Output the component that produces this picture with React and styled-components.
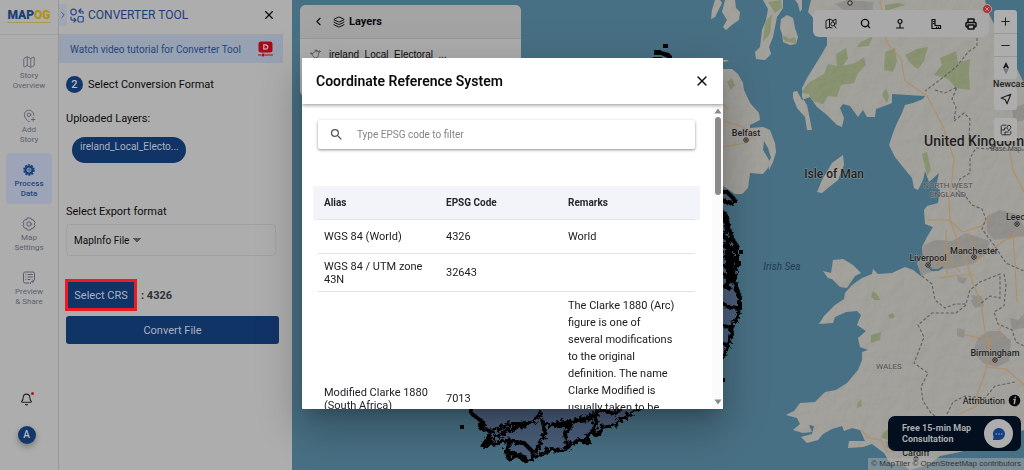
import React, { useState } from "react";
import styled, { createGlobalStyle, css } from "styled-components";
import {
  Bell,
  ChevronLeft,
  ChevronRight,
  Layers,
  Map,
  MapPinPlus,
  Minus,
  Plus,
  Printer,
  Search,
  X,
} from "lucide-react";
import { MdSearch } from "react-icons/md";

const GlobalStyle = createGlobalStyle`
  * {
    box-sizing: border-box;
  }

  body {
    margin: 0;
    overflow: hidden;
    font-family: Roboto, "Liberation Sans", sans-serif;
    font-size: 12px;
    color: #0c0c0e;
  }

  button, input, select {
    font-family: inherit;
    margin: 0;
  }

  svg {
    display: block;
    flex-shrink: 0;
  }
`;

const Page = styled.div`
  display: flex;
  height: 100vh;
  background: #adadad;
`;

/* ---------- rail ---------- */

const Rail = styled.nav`
  display: flex;
  flex-direction: column;
  align-items: center;
  flex: 0 0 59px;
  border-right: 1px solid #999;
`;

const LogoBox = styled.a`
  display: flex;
  justify-content: center;
  align-items: center;
  width: 100%;
  height: 35px;
  padding-bottom: 4px;
  border-bottom: 1px solid #a0a0a0;
  text-decoration: none;
`;

const Logo = styled.span`
  font-size: 12px;
  font-weight: 900;
  line-height: 14px;
  color: #1a3f72;
  border-bottom: 1px solid #a89a50;
`;

const LogoAccent = styled.span`
  color: #b09212;
`;

const RailList = styled.div`
  display: flex;
  flex-direction: column;
  gap: 3px;
  padding-top: 10px;
`;

const RailItem = styled.button`
  display: flex;
  flex-direction: column;
  align-items: center;
  gap: 2px;
  width: 46px;
  height: 51px;
  padding: 10px 0 0;
  border: 0;
  border-radius: 4px;
  background: ${(props) => (props.$active ? "#9da4b8" : "transparent")};
  color: ${(props) => (props.$active ? "#1f457c" : "#5a5f70")};
  font-size: 8px;
  font-weight: ${(props) => (props.$active ? 500 : 400)};
  line-height: 10px;
  cursor: pointer;
`;

const RailFooter = styled.div`
  display: flex;
  flex-direction: column;
  align-items: center;
  gap: 20px;
  margin-top: auto;
  padding: 0 5px 26px 0;
`;

const BellButton = styled.button`
  position: relative;
  padding: 0;
  border: 0;
  background: none;
  color: #222;

  &::after {
    content: "";
    position: absolute;
    top: -1px;
    right: -1px;
    width: 3px;
    height: 3px;
    border-radius: 50%;
    background: #b3121a;
  }
`;

const Avatar = styled.button`
  width: 18px;
  height: 18px;
  padding: 0;
  border: 0;
  border-radius: 50%;
  background: #14376a;
  color: #b4bccb;
  font-size: 10px;
  font-weight: 500;
  line-height: 18px;
  box-shadow: 0 3px 6px rgba(0, 0, 0, 0.3);
`;

/* ---------- converter panel ---------- */

const Panel = styled.aside`
  display: flex;
  flex-direction: column;
  flex: 0 0 233px;
`;

const PanelHeader = styled.header`
  display: flex;
  align-items: center;
  height: 35px;
  margin-right: 9px;
  padding-bottom: 4px;
  border-bottom: 1px solid #a0a0a0;
`;

const CollapseTab = styled.button`
  display: flex;
  align-items: center;
  justify-content: center;
  width: 8px;
  height: 22px;
  padding: 0;
  border: 0;
  border-radius: 0 3px 3px 0;
  background: #a0a7b2;
  color: #26457a;
`;

const PanelTitle = styled.h1`
  display: flex;
  align-items: center;
  gap: 4px;
  flex: 1;
  margin: 0 0 0 3px;
  font-size: 12px;
  font-weight: 400;
  color: #1c4076;
`;

const IconButton = styled.button`
  display: flex;
  padding: 0;
  border: 0;
  background: none;
  color: inherit;
  cursor: pointer;
`;

const HeaderClose = styled(IconButton)`
  margin-right: 7px;
`;

const Banner = styled.a`
  display: flex;
  align-items: center;
  justify-content: space-between;
  height: 28px;
  margin-right: 9px;
  padding: 0 10px 0 11px;
  background: #98a1b1;
  color: #22477c;
  font-size: 10px;
  text-decoration: none;
`;

const StepRow = styled.h2`
  display: flex;
  align-items: center;
  gap: 5px;
  margin: 13px 0 0 7px;
  font-size: 11px;
  font-weight: 400;
`;

const StepNumber = styled.span`
  width: 17px;
  height: 17px;
  border-radius: 50%;
  background: #14376a;
  color: #b4bccb;
  font-weight: 500;
  line-height: 17px;
  text-align: center;
`;

const Fields = styled.form`
  display: flex;
  flex-direction: column;
  align-items: flex-start;
  padding: 19px 13px 0 7px;
`;

const FieldLabel = styled.label`
  font-size: 11px;
  line-height: 14px;
`;

const LayerPill = styled.span`
  width: 114px;
  height: 26px;
  margin: 11px 0 42px 6px;
  padding: 0 8px;
  border-radius: 13px;
  background: #113466;
  color: #a9b3c4;
  font-size: 10px;
  line-height: 20px;
  white-space: nowrap;
`;

const SelectBox = styled.div`
  display: flex;
  align-items: center;
  width: 210px;
  height: 32px;
  margin: 5px 0 23px;
  padding-left: 7px;
  border: 1px solid #a0a0a0;
  border-radius: 4px;
`;

const FormatSelect = styled.select`
  appearance: none;
  width: 70px;
  padding: 0 10px 0 0;
  border: 0;
  background: linear-gradient(to bottom right, #555 50%, transparent 50%) right 3px center / 4px 5px no-repeat,
    linear-gradient(to bottom left, #555 50%, transparent 50%) right 7px center / 4px 5px no-repeat;
  color: #0c0c0e;
  font-size: 10px;
`;

const CrsRow = styled.div`
  display: flex;
  align-items: center;
  gap: 4px;
  margin-left: -1px;
`;

const primary = css`
  background: #113466;
  color: #a9b3c4;
  cursor: pointer;
`;

const CrsButton = styled.button`
  ${primary}
  width: 72px;
  height: 32px;
  padding: 0;
  border: 3px solid #ea1b24;
  font-size: 11px;
`;

const CrsValue = styled.strong`
  font-size: 11px;
  font-weight: 700;
  color: #2c3236;
`;

const ConvertButton = styled.button`
  ${primary}
  width: 100%;
  height: 28px;
  margin-top: 5px;
  border: 0;
  border-radius: 3px;
  font-size: 11px;
`;

/* ---------- map ---------- */

const MapArea = styled.main`
  position: relative;
  flex: 1;
  overflow: hidden;
  background: #487084;
`;

const MapDrawing = styled.svg`
  width: 100%;
  height: 100%;
`;

const LayersCard = styled.section`
  position: absolute;
  top: 5px;
  left: 8px;
  width: 221px;
  height: 92px;
  border-radius: 6px;
  background: #adadad;
  overflow: hidden;
`;

const LayersHeader = styled.header`
  display: flex;
  align-items: center;
  height: 34px;
  padding-left: 12px;
  border-bottom: 1px solid #999;
  background: #a4a4a4;
`;

const LayersTitle = styled.h2`
  display: flex;
  align-items: center;
  gap: 4px;
  margin: 0 0 0 8px;
  font-size: 11px;
  font-weight: 700;
`;

const LayerRow = styled.div`
  display: flex;
  align-items: center;
  gap: 8px;
  padding: 9px 10px;
  font-family: "Liberation Sans", sans-serif;
  font-size: 10px;
  line-height: 13px;
`;

const Toolbar = styled.div`
  position: absolute;
  top: 10px;
  right: 35px;
  display: flex;
  align-items: center;
  justify-content: space-around;
  width: 176px;
  height: 27px;
  border-radius: 6px;
  background: #a9a9a9;
`;

const ToolbarClose = styled.button`
  position: absolute;
  top: -6px;
  right: -3px;
  display: flex;
  align-items: center;
  justify-content: center;
  width: 10px;
  height: 10px;
  padding: 0;
  border: 1px solid #b9a0a0;
  border-radius: 50%;
  background: #a83238;
  color: #d5b5b5;
`;

const Controls = styled.div`
  position: absolute;
  top: 10px;
  right: 7px;
  display: flex;
  flex-direction: column;
  gap: 8px;
`;

const ControlGroup = styled.div`
  border-radius: 3px;
  background: #adadad;
  overflow: hidden;
`;

const ControlButton = styled.button`
  display: flex;
  align-items: center;
  justify-content: center;
  width: 23px;
  height: 23px;
  padding: 0;
  border: 0;
  background: none;
  color: #222;

  & + & {
    border-top: 1px solid #979797;
  }
`;

const BottomStack = styled.div`
  position: absolute;
  right: 0;
  bottom: 0;
  display: flex;
  flex-direction: column;
  align-items: flex-end;
`;

const AttributionToggle = styled.button`
  display: flex;
  align-items: center;
  gap: 3px;
  margin: 0 3px 9px 0;
  padding: 0;
  border: 0;
  background: none;
  font-size: 9px;
  color: #0a0a0a;
`;

const ChatButton = styled.button`
  display: flex;
  align-items: center;
  justify-content: space-between;
  width: 133px;
  height: 35px;
  margin-right: 3px;
  padding: 0 8px 0 14px;
  border: 0;
  border-radius: 7px;
  background: #030f1e;
  color: #adadb0;
  font-size: 9px;
  font-weight: 700;
  line-height: 11px;
  text-align: left;
`;

const ChatBubble = styled.span`
  display: flex;
  align-items: center;
  justify-content: center;
  width: 29px;
  height: 29px;
  border-radius: 50%;
  background: #adadad;
`;

const Credits = styled.div`
  margin-top: 7px;
  padding: 0 3px;
  background: rgba(173, 173, 173, 0.5);
  color: #333;
  font-family: "Liberation Sans", sans-serif;
  font-size: 8px;
  line-height: 12px;
`;

/* ---------- dialog ---------- */

const Overlay = styled.div`
  position: fixed;
  inset: 0;
  display: flex;
  justify-content: center;
  padding: 58px 15px 61px 16px;
`;

const Dialog = styled.div`
  display: flex;
  flex-direction: column;
  width: 421px;
  max-width: 100%;
  border-radius: 1px;
  background: #fff;
  overflow: hidden;
  box-shadow: 0 11px 15px -7px rgba(0, 0, 0, 0.2), 0 24px 38px 3px rgba(0, 0, 0, 0.14),
    0 9px 46px 8px rgba(0, 0, 0, 0.12);
`;

const DialogHeader = styled.header`
  position: relative;
  display: flex;
  align-items: center;
  justify-content: space-between;
  flex: 0 0 46px;
  padding: 0 13px 0 14px;
  background: #fff;
  box-shadow: 0 1px 4px rgba(0, 0, 0, 0.45);
`;

const DialogTitle = styled.h2`
  margin: 0;
  font-size: 14px;
  font-weight: 600;
`;

const DialogBody = styled.div`
  display: flex;
  flex: 1;
  min-height: 0;
`;

const DialogContent = styled.div`
  flex: 1;
  padding: 16px 17px 0 16px;
  overflow: hidden;
`;

const ScrollTrack = styled.div`
  display: flex;
  flex-direction: column;
  align-items: center;
  gap: 3px;
  width: 11px;
  padding: 4px 0;
  background: #fbfbfb;
`;

const ScrollThumb = styled.div`
  width: 6px;
  height: 78px;
  margin-bottom: auto;
  border-radius: 3px;
  background: #8b8b8b;
`;

const SearchBar = styled.label`
  display: flex;
  align-items: center;
  gap: 13px;
  height: 29px;
  margin-bottom: 37px;
  padding: 0 11px;
  border-radius: 2px;
  color: #555;
  box-shadow: 0 1px 3px rgba(0, 0, 0, 0.45);
`;

const SearchInput = styled.input`
  flex: 1;
  padding: 0;
  border: 0;
  outline: 0;
  background: none;
  font-size: 10px;

  &::placeholder {
    color: #858585;
    opacity: 1;
  }
`;

const Table = styled.table`
  width: 100%;
  table-layout: fixed;
  border-collapse: separate;
  border-spacing: 0;
`;

const HeadCell = styled.th`
  height: 34px;
  padding: 0 6px;
  border-bottom: 1px solid #e2e3e8;
  background: #f3f4fa;
  color: #26282c;
  font-size: 10px;
  font-weight: 700;
  text-align: left;

  &:first-child {
    width: 122px;
    box-shadow: -5px 0 0 #f3f4fa;
  }

  &:nth-child(2) {
    width: 122px;
  }

  &:last-child {
    box-shadow: 5px 0 0 #f3f4fa;
  }
`;

const Cell = styled.td`
  height: ${(props) => props.$height}px;
  padding: 0 6px;
  border-bottom: 1px solid #e4e4e4;
  color: #202124;
  font-size: 11px;
  line-height: 13px;

  &:last-child {
    padding-right: 18px;
    line-height: 17px;
    vertical-align: ${(props) => (props.$height > 100 ? "top" : "middle")};
    padding-top: ${(props) => (props.$height > 100 ? 5 : 0)}px;
  }
`;

const systems = [
  { alias: "WGS 84 (World)", code: "4326", remarks: "World", height: 34 },
  { alias: "WGS 84 / UTM zone 43N", code: "32643", remarks: "", height: 38 },
  {
    alias: "Modified Clarke 1880 (South Africa)",
    code: "7013",
    remarks:
      "The Clarke 1880 (Arc) figure is one of several modifications to the original definition. The name Clarke Modified is usually taken to be",
    height: 214,
  },
];

/* ---------- icons ---------- */

const stroke = { fill: "none", stroke: "currentColor", strokeWidth: 1.2, strokeLinecap: "round", strokeLinejoin: "round" };

const ConverterIcon = () => (
  <svg width="14" height="15" viewBox="0 0 14 15" {...stroke} stroke="#28488a">
    <circle cx="3.5" cy="4" r="2.8" />
    <rect x="8" y="8.5" width="5.3" height="5.5" rx="1.3" />
    <path d="M13 5.500V4.200A1.200 1.200 0 0 0 11.800 3H9M10.800 1L8.800 3l2 2M1 9v2a1.200 1.200 0 0 0 1.200 1.200h3.600M4 10.200l2 2-2 2" />
  </svg>
);

const VideoIcon = () => (
  <svg width="15" height="16" viewBox="0 0 15 16">
    <rect x=".5" y=".5" width="14" height="11" rx="2.5" fill="#a80a16" />
    <path d="M5.8 3.800h1.700a2.200 2.200 0 0 1 0 4.400H5.800z" fill="none" stroke="#c7b3b5" strokeWidth="1.2" />
    <path d="M0 14h3M6.500 14H15" stroke="#a80a16" />
    <circle cx="5" cy="14" r="1.5" fill="#a80a16" />
  </svg>
);

const GearIcon = () => (
  <svg width="14" height="14" viewBox="0 0 14 14">
    <circle cx="7" cy="7" r="4.6" fill="#17407a" />
    <circle cx="7" cy="7" r="5" fill="none" stroke="#17407a" strokeWidth="1.6" strokeDasharray="2 1.14" />
    <circle cx="7" cy="7" r="2" fill="none" stroke="#9ca5bc" />
    <path d="M7 5v2l1.7 1M7 7l-1.7 1" stroke="#9ca5bc" strokeWidth=".8" />
  </svg>
);

const SettingsIcon = () => (
  <svg width="14" height="14" viewBox="0 0 14 14" {...stroke} strokeWidth="1">
    <circle cx="7" cy="7" r="2.2" />
    <path d="M5.3 1h3.4l.8 1.7 1.9.1L13 5.4 12.1 7l.9 1.6-1.6 2.6-1.9.1L8.700 13H5.300l-.8-1.700-1.900-.1L1 8.600 1.900 7 1 5.400l1.600-2.600 1.900-.1z" />
  </svg>
);

const PreviewIcon = () => (
  <svg width="14" height="14" viewBox="0 0 14 14" {...stroke} strokeWidth="1">
    <path d="M7 12H3a1.500 1.500 0 0 1-1.500-1.500v-8A1.500 1.500 0 0 1 3 1h8a1.500 1.500 0 0 1 1.500 1.500V9" />
    <path d="M3.800 3.500h.1M6 3.500h4.500M3.800 6h.1M6 6h4.500M3.800 8.500h.1M6 8.500h2M8.500 12.500c0-2 1-2.300 3-2.300M10.500 9l1.500 1.200-1.500 1.300" />
  </svg>
);

const ShapeIcon = () => (
  <svg width="11" height="11" viewBox="0 0 11 11" {...stroke} stroke="#555" strokeWidth=".8">
    <path d="M3 4l3-2 3 1-1 5-3 1-2-2z" />
    <circle cx="1.200" cy="4.500" r=".8" />
    <circle cx="9.500" cy="2.500" r=".8" />
    <circle cx="6" cy="1.500" r=".8" />
  </svg>
);

const MapSearchIcon = () => (
  <svg width="12" height="12" viewBox="0 0 12 12" {...stroke} strokeWidth=".9">
    <path d="M8 2.500L4.500 1.200 1 2.500v8l3.500-1.300L7 10M4.500 1.200v8M11 6V1.200L8 2.500v1" />
    <circle cx="7.800" cy="6" r="2" />
    <path d="M9.200 7.500L11 10" />
  </svg>
);

const PinBaseIcon = () => (
  <svg width="12" height="12" viewBox="0 0 12 12" {...stroke}>
    <circle cx="6" cy="3.500" r="2" />
    <path d="M6 5.500v4M2.500 10h7" />
  </svg>
);

const RulerIcon = () => (
  <svg width="12" height="12" viewBox="0 0 12 12" {...stroke}>
    <path d="M2 1.500h3v6h5.500v3H2zM3.500 3.500H5M3.500 5.500H5M6.500 9v1M8.500 9v1" />
  </svg>
);

const CompassIcon = () => (
  <svg width="14" height="14" viewBox="0 0 14 14">
    <path d="M7 1l3 6H4z" fill="#1e1e1e" />
    <path d="M7 13.500L10 7H4z" fill="#6f7882" />
    <circle cx="7" cy="7" r="1" fill="#adadad" />
  </svg>
);

const LocateArrow = () => (
  <svg width="12" height="12" viewBox="0 0 12 12" {...stroke}>
    <path d="M10.800 1.200L7 10.800 5.300 6.700 1.200 5z" />
  </svg>
);

const BaseMapIcon = () => (
  <svg width="12" height="12" viewBox="0 0 12 12" {...stroke} strokeWidth=".9">
    <path d="M6 1.200H3A1.500 1.500 0 0 0 1.200 3v6A1.500 1.500 0 0 0 3 10.800h6A1.500 1.500 0 0 0 10.800 9V7.500M1.500 6h3V4H6M5 10.500V8h3M8.800 6.500C7.500 5 7 4.200 7 3.200a1.900 1.900 0 0 1 3.800 0c0 1-.6 1.900-2 3.300z" />
  </svg>
);

const ChatIcon = () => (
  <svg width="14" height="14" viewBox="0 0 14 14">
    <path d="M7 1a6 6 0 1 1 0 12H1l.6-3.200A6 6 0 0 1 7 1z" fill="#143f82" />
    <path d="M4.200 7h.1M7 7h.1M9.800 7h.1" stroke="#adadad" strokeWidth="1.300" strokeLinecap="round" />
  </svg>
);

const InfoIcon = () => (
  <svg width="13" height="13" viewBox="0 0 13 13">
    <circle cx="6.500" cy="6.500" r="5.800" fill="#080808" />
    <path d="M6 5.500h1l-.7 4M7.200 3.200h.1" fill="none" stroke="#adadad" strokeWidth="1.500" strokeLinecap="round" />
  </svg>
);

const Arrow = ({ up }) => (
  <svg width="8" height="6" viewBox="0 0 8 6">
    <path d={up ? "M4 .5L7.500 5.500H.5z" : "M4 5.500L7.500 .5H.5z"} fill="#8b8b8b" />
  </svg>
);

/* ---------- map drawing ---------- */

const landPaths = [
  // Great Britain
  "M811 0L808 12 815 20 827 38 827 45 820 57 812 70 807 78 802 88 802 97 807 105 809 115 812 130 807 130 805 117 797 108 793 98 793 92 797 91 802 100 810 97 817 107 827 115 837 125 842 127 844 118 840 108 843 104 850 106 858 117 863 110 867 117 875 117 876 109 892 103 892 94 908 95 925 96 923 99 913 103 905 105 902 113 897 123 893 133 889 145 895 157 903 167 912 178 914 188 918 190 923 180 925 171 929 182 939 173 936 187 940 190 938 203 927 206 924 210 925 224 933 227 927 237 922 247 923 257 917 263 922 277 913 270 905 267 892 273 878 274 873 269 872 274 862 278 852 285 845 293 844 299 835 305 824 316 819 324 833 323 835 317 846 312 857 311 861 315 857 325 866 331 858 338 860 347 868 350 862 352 862 360 858 370 847 383 836 390 825 392 815 402 800 403 794 411 786 415 797 418 800 424 793 430 803 433 812 432 809 425 814 426 812 434 801 437 807 443 818 440 823 434 832 429 842 426 844 431 852 428 860 430 865 441 849 441 848 448 863 447 872 444 884 453 890 463 904 466 910 470 928 465 940 456 960 452 1024 430V83L1018 71 1010 55 998 32 988 12 985 0z",
  // Kintyre, Arran, Islay, Jura, Bute
  "M763 0L768 9 766 20 762 30 760 47 755 52 756 59 765 60 771 54 769 47 773 37 777 17 783 8 783 0z",
  "M787 15L793 18 795 28 798 37 796 44 790 45 783 42 782 34 780 28 781 19z",
  "M725 0L722 12 727 20 723 27 726 30 733 24 739 20 740 12 736 8 735 0z",
  "M715 0L712 10 711 19 715 17 722 3 720 0z",
  "M795 0L798 4 800 12 802 9 802 0z",
  // Northern Ireland
  "M700 69L732 69 738 74 743 83 744 90 750 103 759 113 760 120 750 125 750 128 763 127 770 130 775 143 776 152 773 162 769 170 768 163 771 158 768 148 764 141 763 150 769 160 768 168 763 174 750 173 748 188 742 194 735 194 723 186 700 180z",
  // Isle of Man
  "M843 155L844 165 838 180 828 188 822 193 817 192 822 180 832 163z",
  // Anglesey
  "M833 260L843 259 853 265 861 273 855 276 847 288 840 287 832 279 828 278 823 271 831 273z",
];

const forests = [
  "M768 2l13-2 1 8-7 5zM765 22l7-8-2 20-7 8zM780 34l10 5 5-2 2 7-12-3z",
  "M810 82l14-8 4-10 9 2-1-12 10-6 2 10-5 8 12-3 9-6 2 8-8 8-4 10-13 2-4 12-9-1-5 8-12-3-2-7-9-1z",
  "M861 42l12-6-4 10-12 1zM885 52l10-4 2 14-4 10-9-2zM905 55l12-6 11-2-4 14-6 8-8-6zM940 58l16-7 2 12 12-4-1 14 1 17-14-2-8-9-14-4 8-10z",
  "M882 95l4-7 3 8-2 7zM922 154l5-2 4 18-4 6zM727 82l5-4 3 7-4 5zM871 335l10-3-1 8-9 3zM888 315l5-2 2 4-5 2zM857 404l4-5 1 7-5 2zM873 291l4 3 3 6-5 0-4-3zM884 432l7-5-3 13-7-3zM885 5l14-2 6 2-20 6z",
];

const towns = [
  "M835 4l12-4 27 2-2 10-14-2-10 3zM957 276l10 2-3 6-6-2z",
  "M924 245l12-5 16 1 14-8 24 8-4 12-11 10-20 5-20 2-14 6-5-12zM987 216l13-6 16 4 8 12v10l-30 4-7-8z",
  "M978 338l10-7 12 0 11 10-2 20-12 6-14-4-10-12zM957 328l8 2-1 8-7-2zM970 300l12-1 2 7-9 2zM1010 318l8 2 6-6v14l-12 2zM885 441l14-2-2 10-10-1zM971 295l10 1 3 7-9 2zM1012 108l12-4v16l-10 3z",
];

const roads = [
  "M880 0l5 28 2 15 14 16 4 22 22 15 8 15 9 18 10 30-2 20-3 20 1 22 12 30 5 12 6 20 8 20 3 22 4 18 6 22",
  "M928 220h22l12 12 20-6 10-12M935 262l20-16 22 14 28-20 19-6M946 229l1 44M933 272l15-14 12 14M968 234l6 14",
  "M960 334l30 6 12-14M990 340l-4 30-8 22-1 14-18 8M986 367l20 2 18 16M1008 140l5 30 11 22M861 430l8 8 12 2 6 12 40-2",
  "M720 101l8 8M723 121l14 4 10 4 8 6-10 8-22 4M975 275l-14 0-22 3M1013 232l4 70",
];

const borders = [
  "M977 38l0 8-9 6-11 14-12 10-20 15M935 90l10 3 12-6-5 12 4 8-2 14 10-8 6 6-1 20 4 8",
  "M1024 150h-22l-26-2-6 10 0 15-10 6-4 10 10 8 6 8 10 4 4 10-4 10 12 16 12 18 18 8",
  "M922 276l10 8 3 16 10 8 10-4 11 0 4-14 10-8 20-8 0 24-10-2-10 8M966 305l-10 8-24 0-14 12 6 12-6 16-4 10 14 10-7 14 2 14 8 12 10 8",
  "M1004 274l2 12-2 20-10 6 4 12 14 6 4 12 8 4M947 414l6-12 12-6 20 2 10-12 20-4",
];

const irelandPaths = [
  "M700 205L724 212 727 222 730 236 735 244 735 262 733 274 734 284 738 296 738 308 736 316 731 322 730 332 727 344 720 360 700 390z",
  "M715 190L725 190 734 199 731 202 720 199z",
  "M460 380L470 412 483 422 478 426 490 430 480 445 495 442 508 437 505 450 507 458 515 455 527 460 540 452 550 448 560 450 567 446 576 438 587 442 586 432 597 432 600 426 612 424 625 415 640 405 640 380z",
];

const cities = [
  { name: "Belfast", x: 746, y: 136, cx: 746, cy: 140 },
  { name: "Liverpool", x: 928, y: 261, cx: 928, cy: 265 },
  { name: "Manchester", x: 974, y: 254, cx: 974, cy: 257 },
  { name: "Birmingham", x: 995, y: 356, cx: 995, cy: 360 },
  { name: "Leeds", x: 1018, y: 220, cx: 1017, cy: 224 },
  { name: "Cardiff", x: 916, y: 456, cx: 916, cy: 459 },
];

const Label = styled.text`
  font-family: Roboto, sans-serif;
  font-size: ${(props) => props.$size || 9}px;
  font-weight: ${(props) => props.$weight || 500};
  font-style: ${(props) => (props.$italic ? "italic" : "normal")};
  fill: ${(props) => props.$color || "#1f1f1f"};
  stroke: ${(props) => (props.$italic ? "none" : "rgba(173, 173, 173, 0.6)")};
  stroke-width: 1px;
  paint-order: stroke;
  text-anchor: ${(props) => (props.$start ? "start" : "middle")};
`;

const BaseMap = () => (
  <MapDrawing viewBox="292 0 732 470" preserveAspectRatio="xMaxYMid slice" role="img" aria-label="Map">
    <defs>
      <clipPath id="land">
        {landPaths.map((d) => (
          <path key={d} d={d} />
        ))}
      </clipPath>
      <filter id="relief" x="0" y="0" width="100%" height="100%">
        <feTurbulence type="fractalNoise" baseFrequency="0.07" numOctaves="4" seed="6" />
        <feDiffuseLighting surfaceScale="2" lightingColor="#bbb">
          <feDistantLight azimuth="225" elevation="55" />
        </feDiffuseLighting>
      </filter>
      <filter id="rough" x="-5%" y="-5%" width="110%" height="110%">
        <feTurbulence type="turbulence" baseFrequency="0.18" numOctaves="2" seed="3" />
        <feDisplacementMap in="SourceGraphic" scale="6" />
      </filter>
    </defs>

    <g clipPath="url(#land)">
      <rect x="292" width="732" height="470" fill="#a09f99" />
      <g fill="#838e68">
        {forests.map((d) => (
          <path key={d} d={d} />
        ))}
      </g>
      <g fill="#8d8b87">
        {towns.map((d) => (
          <path key={d} d={d} />
        ))}
      </g>
      <rect x="700" width="324" height="470" filter="url(#relief)" opacity="0.14" />
      <g fill="none" stroke="#b28e62" strokeWidth="1.1">
        {roads.map((d) => (
          <path key={d} d={d} />
        ))}
      </g>
      <g fill="none" stroke="#5f5f5f" strokeWidth="1.1" strokeDasharray="3 2">
        {borders.map((d) => (
          <path key={d} d={d} />
        ))}
      </g>
    </g>
    <path d="M928 266l4 4 6 0 5-3" fill="none" stroke="#487084" strokeWidth="2" />
    <path d="M722 60h5l2 1-5 1z" fill="#a09f99" />

    <g filter="url(#rough)" fill="#4b5f7c" stroke="#040506" strokeWidth="4" strokeLinejoin="bevel">
      {irelandPaths.map((d) => (
        <path key={d} d={d} />
      ))}
      <path
        d="M722 214l4 12-4 10 8 2-8 6 10 4-10 6 12 4-12 6 10 4-10 6 12 4-12 6 8 4M726 238v50M730 244v36M722 304l14 2M722 324l10 3M722 342l6 2"
        fill="none"
      />
      <path
        d="M490 430l20-8 20 0 10-12M480 444l24-14 20-6M505 440l18 2 8 8M505 450l20 6M530 455l8-12 6-10-4-16M548 424l20-4 20-2 10-8M566 446l-2-14 6-12M585 440l8-14 4-18M540 424h26M580 418l20-10 12 4 8-6"
        fill="none"
      />
    </g>
    <path
      d="M663 44h5v4h-5zM654 50h7v5h-7zM661 51l8 2 3 3v2h-4l-7-3zM653 57h9v3h-9zM460 425h4v4h-4zM723 378h2v4h-2zM739 250h4v4h-4zM736 261h5v5h-5z"
      fill="#040506"
    />

    {cities.map((city) => (
      <g key={city.name}>
        <Label x={city.x} y={city.y}>
          {city.name}
        </Label>
        <circle cx={city.cx} cy={city.cy} r="2.200" fill="#a5a5a5" stroke="#1f1f1f" />
        <circle cx={city.cx} cy={city.cy} r=".9" fill="#1f1f1f" />
      </g>
    ))}
    <Label x="993" y="87" $start>Newcastle</Label>
    <Label x="924" y="146" $size={14} $start>United Kingdom</Label>
    <Label x="834" y="178" $size={12}>Isle of Man</Label>
    <Label x="782" y="270" $size={10} $weight={400} $color="#243b52" $italic>Irish Sea</Label>
    <Label x="948" y="188" $size={8} $weight={400} $color="#4d4d4d">NORTH WEST</Label>
    <Label x="948" y="197" $size={8} $weight={400} $color="#4d4d4d">ENGLAND</Label>
    <Label x="889" y="369" $size={8} $weight={400} $color="#4d4d4d">WALES</Label>
    <Label x="1006" y="151" $size={7} $weight={400} $color="#444">Base Map</Label>
    <circle cx="850" cy="3" r="2.200" fill="#a5a5a5" stroke="#1f1f1f" />
  </MapDrawing>
);

const railItems = [
  { label: ["Story", "Overview"], icon: <Map size={14} strokeWidth={1.5} /> },
  { label: ["Add", "Story"], icon: <MapPinPlus size={14} strokeWidth={1.5} /> },
  { label: ["Process", "Data"], icon: <GearIcon />, active: true },
  { label: ["Map", "Settings"], icon: <SettingsIcon /> },
  { label: ["Preview", "& Share"], icon: <PreviewIcon /> },
];

const App = () => {
  const [filter, setFilter] = useState("");
  const [format, setFormat] = useState("MapInfo File");

  const rows = systems.filter((system) => system.code.includes(filter));

  return (
    <>
      <GlobalStyle />
      <Page>
        <Rail>
          <LogoBox href="#">
            <Logo>
              MAP<LogoAccent>OG</LogoAccent>
            </Logo>
          </LogoBox>
          <RailList>
            {railItems.map((item) => (
              <RailItem key={item.label.join(" ")} $active={item.active}>
                {item.icon}
                <span>
                  {item.label[0]}
                  <br />
                  {item.label[1]}
                </span>
              </RailItem>
            ))}
          </RailList>
          <RailFooter>
            <BellButton aria-label="Notifications">
              <Bell size={13} strokeWidth={2} />
            </BellButton>
            <Avatar>A</Avatar>
          </RailFooter>
        </Rail>

        <Panel>
          <PanelHeader>
            <CollapseTab aria-label="Collapse">
              <ChevronRight size={10} />
            </CollapseTab>
            <PanelTitle>
              <ConverterIcon />
              CONVERTER TOOL
            </PanelTitle>
            <HeaderClose aria-label="Close tool">
              <X size={14} strokeWidth={2} />
            </HeaderClose>
          </PanelHeader>
          <Banner href="#">
            Watch video tutorial for Converter Tool
            <VideoIcon />
          </Banner>
          <StepRow>
            <StepNumber>2</StepNumber>
            Select Conversion Format
          </StepRow>
          <Fields onSubmit={(e) => e.preventDefault()}>
            <FieldLabel as="span">Uploaded Layers:</FieldLabel>
            <LayerPill>ireland_Local_Electo...</LayerPill>
            <FieldLabel htmlFor="format">Select Export format</FieldLabel>
            <SelectBox>
              <FormatSelect id="format" value={format} onChange={(e) => setFormat(e.target.value)}>
                <option>MapInfo File</option>
              </FormatSelect>
            </SelectBox>
            <CrsRow>
              <CrsButton type="button">Select CRS</CrsButton>
              <CrsValue>: 4326</CrsValue>
            </CrsRow>
            <ConvertButton type="submit">Convert File</ConvertButton>
          </Fields>
        </Panel>

        <MapArea>
          <BaseMap />
          <LayersCard>
            <LayersHeader>
              <IconButton aria-label="Back">
                <ChevronLeft size={13} />
              </IconButton>
              <LayersTitle>
                <Layers size={12} />
                Layers
              </LayersTitle>
            </LayersHeader>
            <LayerRow>
              <ShapeIcon />
              ireland_Local_Electoral_...
            </LayerRow>
          </LayersCard>

          <Toolbar>
            <IconButton aria-label="Search map"><MapSearchIcon /></IconButton>
            <IconButton aria-label="Search"><Search size={11} strokeWidth={3} /></IconButton>
            <IconButton aria-label="Marker"><PinBaseIcon /></IconButton>
            <IconButton aria-label="Measure"><RulerIcon /></IconButton>
            <IconButton aria-label="Print"><Printer size={12} strokeWidth={3} /></IconButton>
            <ToolbarClose aria-label="Close toolbar">
              <X size={6} strokeWidth={3} />
            </ToolbarClose>
          </Toolbar>

          <Controls>
            <ControlGroup>
              <ControlButton aria-label="Zoom in"><Plus size={13} /></ControlButton>
              <ControlButton aria-label="Zoom out"><Minus size={13} /></ControlButton>
              <ControlButton aria-label="Reset north"><CompassIcon /></ControlButton>
            </ControlGroup>
            <ControlGroup>
              <ControlButton aria-label="My location"><LocateArrow /></ControlButton>
            </ControlGroup>
            <ControlGroup>
              <ControlButton aria-label="Base map"><BaseMapIcon /></ControlButton>
            </ControlGroup>
          </Controls>

          <BottomStack>
            <AttributionToggle>
              Attribution
              <InfoIcon />
            </AttributionToggle>
            <ChatButton>
              <span>
                Free 15-min Map
                <br />
                Consultation
              </span>
              <ChatBubble>
                <ChatIcon />
              </ChatBubble>
            </ChatButton>
            <Credits>© MapTiler © OpenStreetMap contributors</Credits>
          </BottomStack>
        </MapArea>
      </Page>

      <Overlay>
        <Dialog role="dialog" aria-labelledby="crs-title">
          <DialogHeader>
            <DialogTitle id="crs-title">Coordinate Reference System</DialogTitle>
            <IconButton aria-label="Close">
              <X size={16} strokeWidth={2} />
            </IconButton>
          </DialogHeader>
          <DialogBody>
            <DialogContent>
              <SearchBar>
                <MdSearch size={15} />
                <SearchInput
                  aria-label="Filter by EPSG code"
                  placeholder="Type EPSG code to filter"
                  value={filter}
                  onChange={(e) => setFilter(e.target.value)}
                />
              </SearchBar>
              <Table>
                <thead>
                  <tr>
                    <HeadCell>Alias</HeadCell>
                    <HeadCell>EPSG Code</HeadCell>
                    <HeadCell>Remarks</HeadCell>
                  </tr>
                </thead>
                <tbody>
                  {rows.map((row) => (
                    <tr key={row.code}>
                      <Cell $height={row.height}>{row.alias}</Cell>
                      <Cell $height={row.height}>{row.code}</Cell>
                      <Cell $height={row.height}>{row.remarks}</Cell>
                    </tr>
                  ))}
                </tbody>
              </Table>
            </DialogContent>
            <ScrollTrack>
              <Arrow up />
              <ScrollThumb />
              <Arrow />
            </ScrollTrack>
          </DialogBody>
        </Dialog>
      </Overlay>
    </>
  );
};

export default App;
